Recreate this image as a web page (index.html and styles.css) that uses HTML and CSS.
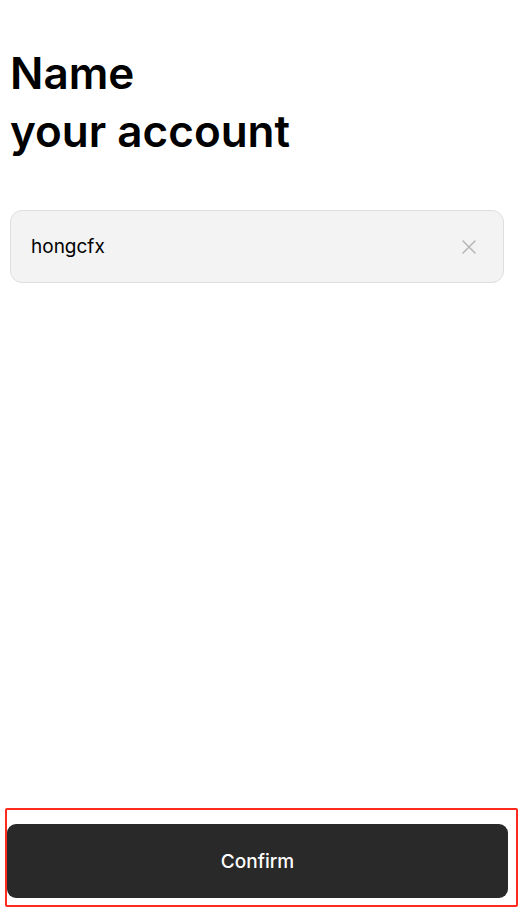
FILE: index.html
```html
<!DOCTYPE html>
<html>
<head>
    <meta name="viewport" content="width=device-width, initial-scale=1">
    <title>Name your account</title>
    <link rel="stylesheet" href="styles.css">
</head>
<body>
    <div class="screen">
        <h1 class="title">Name<br>your account</h1>

        <div class="field">
            <span class="field_value">hongcfx</span>
            <svg class="field_clear" width="16" height="16" viewBox="0 0 16 16">
                <path d="M2 2 L14 14 M14 2 L2 14" stroke="#b8b8b8" stroke-width="1.6" stroke-linecap="round" fill="none"/>
            </svg>
        </div>

        <div class="spacer"></div>

        <div class="action_frame">
            <button class="confirm">Confirm</button>
        </div>
    </div>
</body>
</html>
```

FILE: styles.css
```css
:root {
    --ink:        #000000;
    --button:     #292929;
    --field-bg:   #f3f3f3;
    --field-line: #dedede;
    --marker:     #ff2a1f;
}

* {
    box-sizing: border-box;
}

body {
    margin: 0;
    background-color: #ffffff;
    font-family: Inter, "Noto Sans", sans-serif;
    color: var( --ink );
}

.screen {
    display: flex;
    flex-direction: column;
    height: 915px;
}

.title {
    margin: 44px 0 0 10px;
    font-size: 44px;
    font-weight: 600;
    line-height: 58px;
    letter-spacing: 0;
}

.field {
    display: flex;
    align-items: center;
    justify-content: space-between;

    height: 73px;
    margin: 50px 22px 0 10px;
    padding: 0 26px 0 20px;

    background-color: var( --field-bg );
    border: 1px solid var( --field-line );
    border-radius: 12px;
}

.field_value {
    font-size: 19px;
}

.spacer {
    flex: 1;
}

.action_frame {
    margin: 0 8px 8px 5px;
    padding: 14px 8px 8px 0;
    height: 99px;
    border: 2px solid var( --marker );
    border-radius: 2px;
}

.confirm {
    display: block;
    width: 100%;
    height: 74px;

    border: none;
    border-radius: 9px;
    background-color: var( --button );

    color: #ffffff;
    font-family: Inter, "Noto Sans", sans-serif;
    font-size: 19px;
    font-weight: 500;
}
```
